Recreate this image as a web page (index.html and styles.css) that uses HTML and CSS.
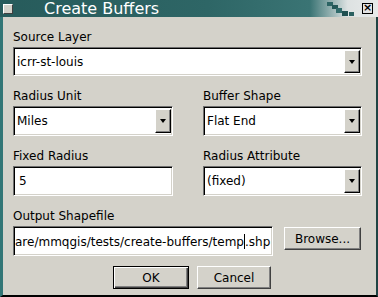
FILE: index.html
```html
<!DOCTYPE html>
<html>
  <head>
    <meta charset="utf-8">
    <title>Create Buffers</title>
    <link rel="stylesheet" href="styles.css">
  </head>
  <body>
    <div class="window">
      <div class="titlebar">
        <span class="tb-btn menu"></span>
        <span class="title">Create Buffers</span>
        <svg class="deco" width="34" height="17" viewBox="0 0 34 17">
          <rect x="3" y="2" width="6" height="4" fill="#2c6464"/>
          <rect x="8" y="5" width="6" height="4" fill="#245858"/>
          <rect x="12" y="8" width="6" height="5" fill="#2f6a6a"/>
          <rect x="18" y="11" width="6" height="5" fill="#1f5050"/>
          <rect x="25" y="12" width="5" height="4" fill="#2a6060"/>
        </svg>
        <span class="tb-btn close">×</span>
      </div>
      <div class="frame">
        <div class="form">
          <div class="field wide">
            <div class="label">Source Layer</div>
            <div class="combo short"><span class="value">icrr-st-louis</span><span class="drop"><i></i></span></div>
          </div>
          <div class="field">
            <div class="label">Radius Unit</div>
            <div class="combo"><span class="value">Miles</span><span class="drop"><i></i></span></div>
          </div>
          <div class="field">
            <div class="label">Buffer Shape</div>
            <div class="combo"><span class="value">Flat End</span><span class="drop"><i></i></span></div>
          </div>
          <div class="field">
            <div class="label">Fixed Radius</div>
            <div class="combo entry"><span class="value pad">5</span></div>
          </div>
          <div class="field">
            <div class="label">Radius Attribute</div>
            <div class="combo"><span class="value">(fixed)</span><span class="drop"><i></i></span></div>
          </div>
          <div class="field wide">
            <div class="label">Output Shapefile</div>
            <div class="file-row">
              <div class="combo entry path"><span class="value">are/mmqgis/tests/create-buffers/temp<span class="caret"></span>.shp</span></div>
              <button class="btn browse">Browse...</button>
            </div>
          </div>
        </div>
        <div class="actions">
          <button class="btn default">OK</button>
          <button class="btn cancel">Cancel</button>
        </div>
      </div>
    </div>
  </body>
</html>
```

FILE: styles.css
```css
body {
  margin: 0;
  font-family: "DejaVu Sans", sans-serif;
  font-size: 12px;
  line-height: 14px;
  color: #000;
}
.window {
  width: 378px;
  height: 297px;
  display: flex;
  flex-direction: column;
  background: #d4d2ca;
}
.titlebar {
  height: 17px;
  display: flex;
  align-items: center;
  padding-left: 3px;
  background: linear-gradient(to right, #275b5b 0%, #2e6666 55%, #3a7474 82%, #9cb6b6 88%, #dde2e2 92%, #e8eaea 100%);
}
.tb-btn {
  box-sizing: border-box;
  width: 10px;
  height: 10px;
  background: #d4d2ca;
  border: 1px solid;
  border-color: #fff #404040 #404040 #fff;
}
.title {
  margin-left: 31px;
  color: #fff;
  font-size: 16px;
  line-height: 17px;
}
.deco {
  margin-left: auto;
  margin-right: 4px;
}
.tb-btn.close {
  width: 11px;
  height: 11px;
  margin-right: 5px;
  border-color: #000;
  background: #e4e4e4;
  font-size: 11px;
  line-height: 8px;
  font-weight: bold;
  text-align: center;
}
.frame {
  flex: 1;
  display: flex;
  flex-direction: column;
  border-left: 3px solid #327676;
  border-right: 2px solid #1f4444;
  border-bottom: 2px solid #000;
  padding: 13px 14px 0 10px;
}
.form {
  display: grid;
  grid-template-columns: 160px 159px;
  column-gap: 30px;
  row-gap: 13px;
}
.field.wide {
  grid-column: 1 / 3;
}
.label {
  margin-bottom: 3px;
}
.combo {
  box-sizing: border-box;
  height: 30px;
  display: flex;
  align-items: center;
  background: #fff;
  border: 1px solid;
  border-color: #6e6e6e #fff #fff #6e6e6e;
  box-shadow: inset 1px 1px 0 #000, inset -1px -1px 0 #d4d2ca;
}
.combo.short {
  height: 29px;
}
.value {
  flex: 1;
  padding-left: 3px;
  white-space: nowrap;
}
.value.pad {
  padding-left: 5px;
}
.drop {
  box-sizing: border-box;
  width: 16px;
  align-self: stretch;
  margin: 2px 1px 2px 0;
  display: flex;
  align-items: center;
  justify-content: center;
  background: #d4d2ca;
  border: 1px solid;
  border-color: #fff #000 #000 #fff;
  box-shadow: inset -1px -1px 0 #808080;
}
.drop i {
  width: 0;
  height: 0;
  border-left: 3px solid transparent;
  border-right: 3px solid transparent;
  border-top: 4px solid #000;
}
.file-row {
  display: flex;
  align-items: flex-start;
  column-gap: 11px;
}
.path {
  width: 260px;
  overflow: hidden;
}
.path .value {
  flex: none;
  padding-left: 1px;
}
.caret {
  display: inline-block;
  width: 0;
  height: 15px;
  border-left: 1px solid #000;
  vertical-align: -3px;
}
.btn {
  box-sizing: border-box;
  height: 23px;
  padding: 0;
  font-family: "DejaVu Sans", sans-serif;
  font-size: 12px;
  color: #000;
  background: #d4d2ca;
  border: 1px solid;
  border-color: #fff #404040 #404040 #fff;
  box-shadow: inset -1px -1px 0 #808080;
}
.browse {
  width: 77px;
  margin-top: 1px;
}
.actions {
  display: flex;
  justify-content: center;
  column-gap: 8px;
  padding-left: 9px;
  margin-top: 10px;
}
.default {
  width: 76px;
  border: 1px solid #000;
  box-shadow: inset 1px 1px 0 #fff, inset -1px -1px 0 #404040, inset -2px -2px 0 #808080;
}
.cancel {
  width: 74px;
}
```
